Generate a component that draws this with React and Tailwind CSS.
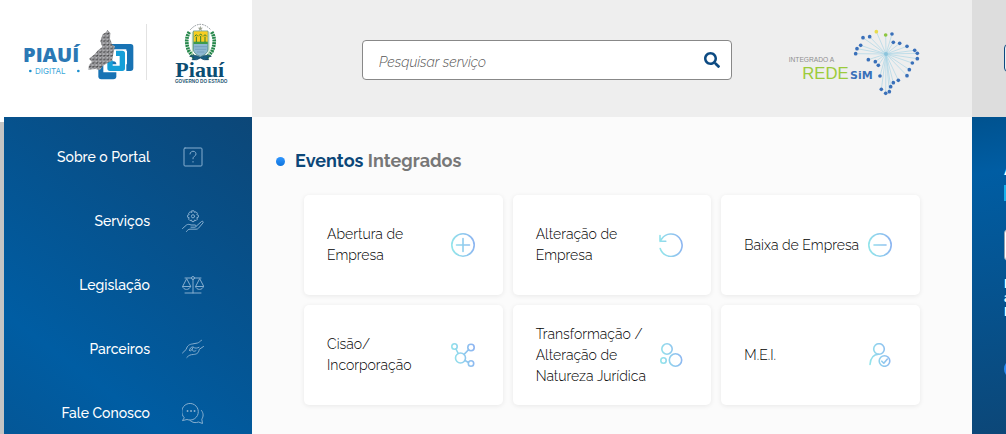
import { FaSearch } from 'react-icons/fa';

const iconProps = {
  fill: 'none',
  strokeLinecap: 'round',
  strokeLinejoin: 'round',
  'aria-hidden': true,
};

const menuItems = [
  {
    label: 'Sobre o Portal',
    icon: (
      <>
        <rect x="2" y="2" width="18" height="18" rx="1" />
        <path d="M8 8a3 2.700 0 1 1 4.600 2.200c-1.200.7-1.600 1.200-1.600 2.600M11 15.500v.6" />
      </>
    ),
  },
  {
    label: 'Serviços',
    icon: (
      <>
        <path d="M10 .8h2l.5 1.600 1.500-.6 1.400 1.400-.6 1.500 1.600.5v2l-1.600.5.6 1.500-1.400 1.400-1.500-.6-.5 1.600h-2l-.5-1.600-1.500.6-1.400-1.400.6-1.500-1.600-.5v-2l1.600-.5-.6-1.500L8 1.800l1.500.6z" />
        <circle cx="11" cy="6.300" r="1.600" />
        <path d="M.5 18.500l4-3.500c1.500-1 3-.7 4.500 0h4c1.500 0 1.500 2.200 0 2.200H9M14.500 16l5-4.500c1-.8 2.300.3 1.500 1.400l-4.500 5.300c-.7.8-1.500 1-2.500 1H8c-1.500 0-2.500.8-3.500 2.300" />
      </>
    ),
  },
  {
    label: 'Legislação',
    icon: (
      <>
        <path d="M3 19h16M11 5v14M3 4h6.500M12.500 4H19" />
        <circle cx="11" cy="4" r="1.500" />
        <path d="M4.500 5L.6 12.500h7.800zM17.500 5l-3.900 7.500h7.800zM.6 12.500c.4 4 7.400 4 7.800 0M13.600 12.500c.4 4 7.400 4 7.800 0" />
      </>
    ),
  },
  {
    label: 'Parceiros',
    icon: (
      <path d="M.5 15l3.700-3.600c1.200-4 3-5 6.600-5.500l4.700-.9c1.700-.4 2.600-2 4-2.700M21.500 8.500l-4.200 2.800c-.8 4.200-2.800 4.900-6 5.200-2.800.2-4.300.5-6.500 3M7.500 12.500c.5-2.500 1.500-3.600 3.500-3.600M7.500 12.500c1 .8 1.800.4 2.300-1l1.500-2.200c2 1.200 4 1 5.700 0M10 11.300c.3 2.300 2.600 2.400 4 1.300" />
    ),
  },
  {
    label: 'Fale Conosco',
    icon: (
      <>
        <path d="M2 15.500A8.300 8.300 0 1 1 5 17.500L.8 18.500z" />
        <path d="M5.500 9h.1M9 9h.1M12.500 9h.1" strokeWidth="1.800" />
        <path d="M19.500 8.500c2.300 3 2 6 .3 8.700l.7 4.300-4-1.500c-3 1.200-6 .8-8.500-1.500" />
      </>
    ),
  },
];

const eventos = [
  {
    label: 'Abertura de Empresa',
    icon: (
      <>
        <circle cx="12" cy="12" r="11.200" />
        <path d="M5.500 12h13M12 5.500v13" />
      </>
    ),
  },
  {
    label: 'Alteração de Empresa',
    icon: <path d="M1.200 15.500A11.200 11.200 0 1 0 2.800 5.700L1 8.300M1 2.500v5.800h5.800" />,
  },
  {
    label: 'Baixa de Empresa',
    icon: (
      <>
        <circle cx="12" cy="12" r="11.200" />
        <path d="M6 12h12" />
      </>
    ),
  },
  {
    label: 'Cisão/ Incorporação',
    icon: (
      <>
        <circle cx="9.500" cy="15" r="5" />
        <circle cx="3.500" cy="3.500" r="2.700" />
        <circle cx="20" cy="4.500" r="3.200" />
        <circle cx="20" cy="20.500" r="2.700" />
        <path d="M4.900 6l2.300 4.400M17.500 6.700l-4.400 4.700M14 17.500l3.500 2" />
      </>
    ),
  },
  {
    label: 'Transformação / Alteração de Natureza Jurídica',
    icon: (
      <>
        <circle cx="8" cy="6" r="5.200" />
        <circle cx="16.500" cy="17" r="6.200" />
        <circle cx="4.500" cy="17.500" r="2.700" />
      </>
    ),
  },
  {
    label: 'M.E.I.',
    icon: (
      <>
        <circle cx="11" cy="6" r="5.300" />
        <path d="M2 21.500c.5-6.500 3.500-10 8.500-10.200" />
        <circle cx="16.500" cy="18" r="5.300" />
        <path d="M13.800 18.200l2 2 3.600-4.200" />
      </>
    ),
  },
];

// spokes of the Redesim map, all drawn from the centre point
const mapDots = [
  [279, 83], [299, 80], [366, 72], [370, 97], [389, 100], [411, 109], [434, 121],
  [442, 130], [442, 146], [427, 159], [418, 179], [411, 197], [385, 211], [370, 218],
  [362, 230], [358, 245], [347, 250], [334, 238], [330, 198], [325, 166], [316, 155],
  [295, 149], [257, 131], [261, 116], [272, 106],
];

const PiauiDigitalLogo = () => (
  <svg viewBox="72 72 330 168" className="w-[110px] h-14 overflow-visible" role="img" aria-label="Piauí Digital">
    <defs>
      <pattern id="mapTexture" width="11" height="11" patternUnits="userSpaceOnUse">
        <rect width="11" height="11" fill="#a3a3a6" />
        <path d="M0 2l5 4 6-5M5 6l-2 5M5 6l6 3" stroke="#d5d5d7" strokeWidth="1.500" />
        <circle cx="3" cy="3" r="2.500" fill="#68686c" />
        <circle cx="8" cy="8" r="2.500" fill="#77777b" />
      </pattern>
    </defs>
    <text x="69" y="187" fontSize="60" fontWeight="800" fill="#2b78b5" fontFamily="'Open Sans', sans-serif">PIAUÍ</text>
    <text x="105" y="221" fontSize="24" fill="#3ba6d9" fontFamily="Inter, sans-serif">DIGITAL</text>
    <circle cx="91" cy="213" r="4" fill="#1c8fce" />
    <circle cx="235" cy="213" r="4" fill="#1c8fce" />
    <rect x="295" y="184" width="54" height="54" rx="9" fill="#1873b4" />
    <path d="M330 132h62q8 0 8 8v64q0 9-9 9h-14v-20h4v-41h-51z" fill="#1873b4" />
    <path d="M331 160h36v45h-45v-24" fill="none" stroke="#fff" strokeWidth="24" />
    <path d="M348 160h19v45h-37v-24" fill="none" stroke="#159fd8" strokeWidth="16" strokeLinejoin="round" />
    <path d="M322 90l9 9-1 17 7 18 8 5-4 18-5 25-15 8-13 8-8 12-14-3-21 2 2-14 9-9-9-10 17-13 10-12 13-10-6-18 7-20 10-6z" fill="url(#mapTexture)" />
  </svg>
);

const PiauiGovernoLogo = () => (
  <svg viewBox="522 72 156 186" className="w-[52px] h-[62px] overflow-visible" role="img" aria-label="Piauí Governo do Estado">
    <path d="M568 89q30-32 61 0" fill="none" stroke="#8b9196" strokeWidth="3" strokeDasharray="5 3" />
    <path d="M598 77l2 6h6l-5 4 2 6-5-4-5 4 2-6-5-4h6z" fill="#9aa08f" />
    <path d="M565 96q-15 24-1 58l16 20M632 96q15 24 1 58l-16 20" fill="none" stroke="#27884c" strokeWidth="11" strokeDasharray="6 2" />
    <path d="M574 96v74M624 96v74" fill="none" stroke="#b4d8b2" strokeWidth="3" />
    <path d="M577 93h44v55q0 13-22 22-22-9-22-22z" fill="#8db8d2" stroke="#327b69" strokeWidth="2" />
    <path d="M578 94h42v33h-42z" fill="#f8ce20" />
    <path d="M578 125h42v7h-42z" fill="#3d9b4c" />
    <path d="M586 110v16M599 108v18M612 110v16M581 109l5-5 5 5M594 107l5-5 5 5M607 109l5-5 5 5" fill="none" stroke="#38802e" strokeWidth="3" />
    <path d="M580 140h38M582 148h34M588 156h22" stroke="#6a97b3" strokeWidth="2" />
    <path d="M566 169q14-8 32 3 18-11 33-3l-13 3 5 7q-15 3-25-5-10 8-25 5l6-7z" fill="#195f83" stroke="#10445f" strokeWidth="2" />
    <text x="523" y="230" fontSize="66" fontWeight="700" fill="#0b4d73" fontFamily="'Liberation Serif', serif">Piauí</text>
    <text x="522" y="249" fontSize="14" fontWeight="700" fill="#1f5673" fontFamily="'Liberation Sans', sans-serif">GOVERNO DO ESTADO</text>
  </svg>
);

const RedesimLogo = () => (
  <svg viewBox="54 54 396 210" className="w-[132px] h-[70px] shrink-0 overflow-visible" role="img" aria-label="Integrado à Redesim">
    {[...mapDots, [319, 65], [347, 75]].map(([x, y]) => (
      <path key={`${x}-${y}`} d={`M348 132L${x} ${y}`} stroke="#a9d5e6" strokeWidth="2" />
    ))}
    <circle cx="348" cy="132" r="6" fill="#8cc4dc" />
    {mapDots.map(([x, y]) => (
      <circle key={`${x}-${y}`} cx={x} cy={y} r="5.500" fill="#3a70b9" />
    ))}
    <circle cx="319" cy="65" r="5.500" fill="#e8dc4b" />
    <circle cx="347" cy="75" r="5.500" fill="#8dc63f" />
    <text x="56" y="156" fontSize="20" fill="#8f8f8f" fontFamily="'Liberation Sans', sans-serif">INTEGRADO A</text>
    <text x="97" y="206" fontSize="50" fill="#9ccb3b" fontFamily="'Liberation Sans', sans-serif">REDE</text>
    <text x="240" y="206" fontSize="33" fontWeight="700" fill="#3a70b9" fontFamily="'DejaVu Sans', sans-serif">SiM</text>
  </svg>
);

const Sidebar = () => (
  <div className="flex w-[252px] shrink-0">
    <div className="w-1 mt-[5px] bg-[#c4c4c4]" />
    <nav className="flex-1 pt-2 bg-[linear-gradient(217deg,#0c4778_0%,#005da3_76%,#045797_100%)]">
      {menuItems.map(item => (
        <a
          key={item.label}
          href="#"
          className="flex h-16 items-center justify-end gap-8 pr-12 text-sm font-medium text-white"
        >
          {item.label}
          <svg {...iconProps} viewBox="0 0 22 22" className="w-[22px] h-[22px] stroke-[#86aecf]">
            {item.icon}
          </svg>
        </a>
      ))}
    </nav>
  </div>
);

const EventCard = ({ label, icon }) => (
  <a
    href="#"
    className="flex h-[100px] items-center justify-between rounded-[5px] bg-white pl-[23px] pr-7 text-sm leading-[21px] font-light text-black shadow-[0_1px_5px_rgba(0,0,0,0.08)]"
  >
    <span className="min-w-0 flex-1">{label}</span>
    <svg {...iconProps} viewBox="0 0 24 24" className="w-6 h-6 shrink-0 stroke-[url(#eventGradient)]" strokeWidth="1.600">
      {icon}
    </svg>
  </a>
);

const AccessPanel = () => (
  <aside className="w-[34px] shrink-0 overflow-hidden bg-[linear-gradient(170deg,#00528f_0%,#005da3_18%,#0c4778_100%)] pl-8 pt-10 text-white">
    <div className="w-52">
      <h2 className="text-lg leading-6 font-bold">A</h2>
      <div className="mt-1 h-4 w-40 bg-[#1ab0ec]" />
      <div className="mt-7 h-8 w-44 rounded border border-gray-400 bg-white" />
      <div className="mt-4 text-xs leading-[14px] font-bold">
        <p>E</p>
        <p>a</p>
        <p>E</p>
      </div>
      <div className="mt-10 h-5 w-32 rounded-full bg-[#2b8cf5]" />
    </div>
  </aside>
);

export default function App() {
  return (
    <div className="flex h-screen flex-col overflow-hidden bg-white font-['Raleway',Lato,sans-serif]">
      <header className="flex h-[117px] shrink-0">
        <div className="flex w-[252px] shrink-0 items-start pl-6 pt-6">
          <PiauiDigitalLogo />
          <div className="ml-3 mr-7 h-14 w-px bg-[#e2e2e2]" />
          <PiauiGovernoLogo />
        </div>
        <div className="flex min-w-0 flex-1 items-start justify-between bg-[#eee] pt-7 pl-[110px] pr-[52px]">
          <form className="mt-3 mr-14 flex h-10 flex-1 items-center rounded border border-[#888] bg-white pl-4 pr-[11px]">
            <input
              type="text"
              aria-label="Pesquisar serviço"
              placeholder="Pesquisar serviço"
              className="min-w-0 flex-1 pt-1 text-sm font-light italic outline-none placeholder:text-[#555]"
            />
            <button type="button" aria-label="Pesquisar" className="text-[#0c4a82]">
              <FaSearch className="w-4 h-4" />
            </button>
          </form>
          <RedesimLogo />
        </div>
        <div className="w-[34px] shrink-0 overflow-hidden bg-[#ddd] pl-8 pt-11">
          <div className="h-7 w-24 rounded border border-[#0c4a82] bg-[#eee]" />
        </div>
      </header>

      <div className="flex min-h-0 flex-1">
        <Sidebar />
        <main className="min-w-0 flex-1 bg-[#fbfbfb] pt-8">
          <h1 className="flex items-center gap-[10px] pl-6 text-lg leading-6 font-bold text-[#777]">
            <span className="h-[9px] w-[9px] rounded-full bg-linear-to-b from-[#2f96ff] to-[#0c74dc]" />
            <span>
              <span className="text-[#0c4778]">Eventos</span> Integrados
            </span>
          </h1>
          <div className="mt-[22px] grid grid-cols-3 gap-[10px] px-[52px]">
            {eventos.map(evento => (
              <EventCard key={evento.label} {...evento} />
            ))}
          </div>
        </main>
        <AccessPanel />
      </div>

      <svg className="absolute h-0 w-0" aria-hidden="true">
        <defs>
          <linearGradient id="eventGradient" gradientUnits="userSpaceOnUse" x1="0" y1="14" x2="24" y2="10">
            <stop offset="0" stopColor="#93e6ea" />
            <stop offset="1" stopColor="#8db4f1" />
          </linearGradient>
        </defs>
      </svg>
    </div>
  );
}
